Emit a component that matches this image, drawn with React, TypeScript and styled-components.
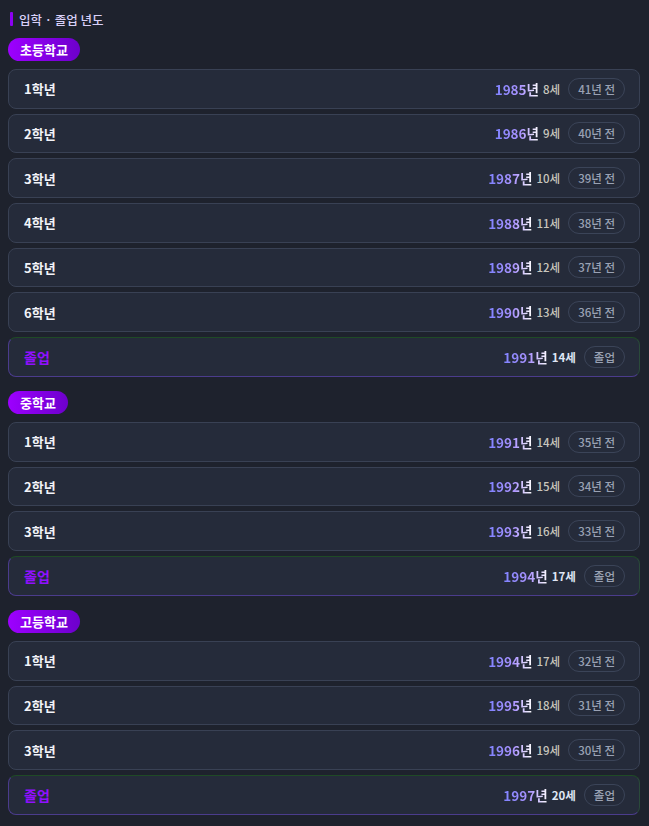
import { FunctionComponent } from "react";
import styled, { createGlobalStyle } from "styled-components";

type Row = { label: string; year: number; age: number; ago: string; grad?: boolean };
type Section = { name: string; rows: Row[] };

const mk = (start: number, startAge: number, count: number): Row[] => {
  const rows: Row[] = [];
  for (let i = 0; i < count; i++) {
    rows.push({ label: `${i + 1}학년`, year: start + i, age: startAge + i, ago: `${2026 - start - i}년 전` });
  }
  rows.push({ label: "졸업", year: start + count, age: startAge + count, ago: "졸업", grad: true });
  return rows;
};

const sections: Section[] = [
  { name: "초등학교", rows: mk(1985, 8, 6) },
  { name: "중학교", rows: mk(1991, 14, 3) },
  { name: "고등학교", rows: mk(1994, 17, 3) },
];

const App: FunctionComponent = () => {
  return (
    <Page>
      <GlobalStyle />
      <Title>입학 · 졸업 년도</Title>
      {sections.map((s) => (
        <Group key={s.name}>
          <Badge>{s.name}</Badge>
          <List>
            {s.rows.map((r) => (
              <Card key={r.label} $grad={r.grad}>
                <Label $grad={r.grad}>{r.label}</Label>
                <Right>
                  <Year>{r.year}년</Year>
                  <Age $grad={r.grad}>{r.age}세</Age>
                  <Chip>{r.ago}</Chip>
                </Right>
              </Card>
            ))}
          </List>
        </Group>
      ))}
    </Page>
  );
};

const GlobalStyle = createGlobalStyle`
  html, body {
    margin: 0;
    background: #1e222d;
  }
  body {
    font-family: "Noto Sans CJK KR", "Noto Sans", sans-serif;
    color: #e6e8ef;
  }
`;

const Page = styled.div`
  padding: 8px 9px 12px 8px;
  display: flex;
  flex-direction: column;
  gap: 14.4px;
`;

const Title = styled.div`
  display: flex;
  align-items: center;
  gap: 6px;
  font-size: 12.5px;
  font-weight: 500;
  color: #d8d0f8;
  height: 22px;
  margin-bottom: -6.4px;
  &::before {
    content: "";
    width: 3px;
    height: 14px;
    margin-left: 2px;
    border-radius: 1px;
    background: #8c00f2;
  }
`;

const Group = styled.div`
  display: flex;
  flex-direction: column;
  gap: 8px;
`;

const Badge = styled.div`
  align-self: flex-start;
  height: 23px;
  line-height: 23px;
  padding: 0 12px;
  border-radius: 12px;
  background: linear-gradient(90deg, #9d00ff, #6d00cc);
  color: #ffffff;
  font-size: 13px;
  font-weight: 700;
`;

const List = styled.div`
  display: flex;
  flex-direction: column;
  gap: 5px;
`;

const Card = styled.div<{ $grad?: boolean }>`
  height: 39.67px;
  box-sizing: border-box;
  display: flex;
  align-items: center;
  justify-content: space-between;
  padding: 0 14px 0 15px;
  background: #252b3a;
  border: 1px solid ${(p) => (p.$grad ? "#4b3c8c" : "#394154")};
  border-top-color: ${(p) => (p.$grad ? "#1f4a26" : "#394154")};
  border-right-color: ${(p) => (p.$grad ? "#2a4a3a" : "#394154")};
  border-radius: 8px;
`;

const Label = styled.div<{ $grad?: boolean }>`
  font-size: ${(p) => (p.$grad ? "14px" : "13px")};
  font-weight: 700;
  color: ${(p) => (p.$grad ? "#9010ff" : "#f2f3f8")};
`;

const Right = styled.div`
  display: flex;
  align-items: center;
`;

const Year = styled.span`
  font-size: 13.5px;
  font-weight: 700;
  background: linear-gradient(90deg, #7f82ff, #ad95ff 60%, #ffffff);
  -webkit-background-clip: text;
  background-clip: text;
  color: transparent;
`;

const Age = styled.span<{ $grad?: boolean }>`
  margin-left: 4px;
  font-size: 11.5px;
  font-weight: ${(p) => (p.$grad ? 700 : 500)};
  color: ${(p) => (p.$grad ? "#dfe6f5" : "#c9c6bd")};
`;

const Chip = styled.span`
  margin-left: 8px;
  height: 22px;
  line-height: 20px;
  box-sizing: border-box;
  padding: 0 9px;
  border: 1px solid #3b4458;
  border-radius: 11px;
  font-size: 11.5px;
  font-weight: 500;
  color: #9aa2b4;
`;

export default App;
